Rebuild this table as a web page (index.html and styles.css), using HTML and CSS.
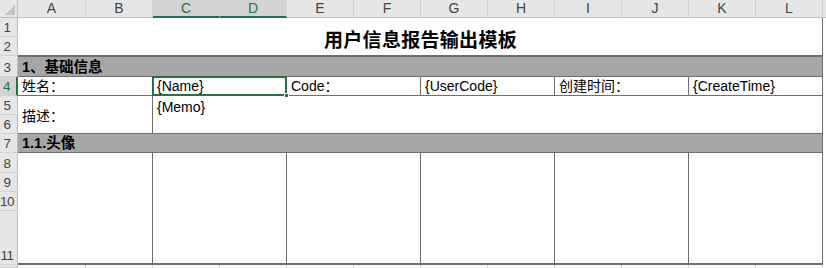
FILE: index.html
```html
<!DOCTYPE html>
<html lang="zh-CN">
<head>
<meta charset="utf-8">
<title>用户信息报告输出模板</title>
<link rel="stylesheet" href="styles.css">
</head>
<body>
<div class="sheet">
  <div class="corner"><span class="tri"></span></div>
  <div class="ch">A</div>
  <div class="ch">B</div>
  <div class="ch sel">C</div>
  <div class="ch sel">D</div>
  <div class="ch">E</div>
  <div class="ch">F</div>
  <div class="ch">G</div>
  <div class="ch">H</div>
  <div class="ch">I</div>
  <div class="ch">J</div>
  <div class="ch">K</div>
  <div class="ch">L</div>
  <div class="ch fillh"></div>

  <div class="rh r1">1</div>
  <div class="rh r2">2</div>
  <div class="rh r3">3</div>
  <div class="rh r4 rsel">4</div>
  <div class="rh r5">5</div>
  <div class="rh r6">6</div>
  <div class="rh r7">7</div>
  <div class="rh r8">8</div>
  <div class="rh r9">9</div>
  <div class="rh r10">10</div>
  <div class="rh r11 bottom">11</div>
  <div class="rh r12"></div>

  <div class="cell title">用户信息报告输出模板</div>
  <div class="cell band band1">1、基础信息</div>

  <div class="cell f4 c-ab">姓名：</div>
  <div class="cell f4 c-cd active">{Name}<span class="handle"></span></div>
  <div class="cell f4 c-ef">Code：</div>
  <div class="cell f4 c-gh">{UserCode}</div>
  <div class="cell f4 c-ij">创建时间：</div>
  <div class="cell f4 c-kl">{CreateTime}</div>

  <div class="cell desc c-ab">描述：</div>
  <div class="cell memo">{Memo}</div>

  <div class="cell band band2">1.1.头像</div>

  <div class="cell pic c-ab"></div>
  <div class="cell pic c-cd"></div>
  <div class="cell pic c-ef"></div>
  <div class="cell pic c-gh"></div>
  <div class="cell pic c-ij"></div>
  <div class="cell pic c-kl"></div>

  <div class="grid12"></div><div class="grid12"></div><div class="grid12"></div>
  <div class="grid12"></div><div class="grid12"></div><div class="grid12"></div>
  <div class="grid12"></div><div class="grid12"></div><div class="grid12"></div>
  <div class="grid12"></div><div class="grid12"></div><div class="grid12"></div>
</div>
</body>
</html>
```
FILE: styles.css
```css
html, body {
  margin: 0;
  padding: 0;
  background: #ffffff;
}

.sheet {
  width: 826px;
  height: 268px;
  overflow: hidden;
  display: grid;
  grid-template-columns: 18px 68px repeat(11, 67px) 1fr;
  grid-template-rows: 18px 19px 19px 21px 19px 19px 19px 19px 20px 19px 19px 54px 1fr;
  font-family: "Liberation Sans", "Noto Sans CJK SC", sans-serif;
  font-size: 14px;
  color: #000;
  background: #fff;
}

.sheet > div {
  box-sizing: border-box;
  min-width: 0;
}

/* column headers */
.corner {
  grid-column: 1;
  grid-row: 1;
  background: #e6e6e6;
  border-right: 1px solid #bdbdbd;
  border-bottom: 1px solid #bdbdbd;
  position: relative;
}
.tri {
  position: absolute;
  right: 2px;
  bottom: 2px;
  width: 0;
  height: 0;
  border-left: 10px solid transparent;
  border-bottom: 10px solid #c4c4c4;
}

.ch {
  grid-row: 1;
  background: #e6e6e6;
  border-right: 1px solid #d2d2d2;
  border-bottom: 1px solid #bdbdbd;
  color: #444;
  font-size: 14px;
  line-height: 17px;
  text-align: center;
}
.ch.sel {
  background: #d3d3d3;
  color: #217346;
  border-bottom: 2px solid #217346;
}
.ch.fillh {
  border-right: none;
}

/* row headers */
.rh {
  grid-column: 1;
  background: #e6e6e6;
  border-right: 1px solid #bdbdbd;
  border-bottom: 1px solid #d0d0d0;
  color: #444;
  font-size: 13.5px;
  padding-right: 3px;
  display: flex;
  align-items: flex-end;
  justify-content: center;
  line-height: 17px;
  white-space: nowrap;
  letter-spacing: -0.5px;
}
.rh.rsel {
  background: #d3d3d3;
  color: #217346;
  border-right: 2px solid #217346;
}
.r1 { grid-row: 2; }
.r2 { grid-row: 3; }
.r3 { grid-row: 4; }
.r4 { grid-row: 5; }
.r5 { grid-row: 6; }
.r6 { grid-row: 7; }
.r7 { grid-row: 8; }
.r8 { grid-row: 9; }
.r9 { grid-row: 10; }
.r10 { grid-row: 11; }
.r11 { grid-row: 12; }
.r12 { grid-row: 13; }

/* data cells */
.cell {
  border-right: 1px solid #6e6e6e;
  border-bottom: 1px solid #6e6e6e;
  padding: 0 3px 0 4px;
  white-space: nowrap;
  overflow: visible;
  display: flex;
  align-items: flex-end;
  line-height: 17px;
}

.title {
  grid-column: 2 / 14;
  grid-row: 2 / 4;
  justify-content: center;
  font-weight: bold;
  font-size: 19px;
  line-height: 24px;
  padding-bottom: 2px;
  letter-spacing: 0.3px;
}

.band {
  grid-column: 2 / 14;
  background: #a6a6a6;
  font-weight: bold;
  font-size: 14.5px;
}
.band1 { grid-row: 4; border-top: 1px solid #6e6e6e; }
.band2 { grid-row: 8; }

.f4 { grid-row: 5; }
.c-ab { grid-column: 2 / 4; }
.c-cd { grid-column: 4 / 6; }
.c-ef { grid-column: 6 / 8; }
.c-gh { grid-column: 8 / 10; }
.c-ij { grid-column: 10 / 12; }
.c-kl { grid-column: 12 / 14; }

.active {
  position: relative;
}
.active::after {
  content: "";
  position: absolute;
  left: -1px;
  top: -1px;
  right: -1px;
  bottom: -1px;
  border: 2px solid #217346;
  pointer-events: none;
}
.handle {
  position: absolute;
  right: -3px;
  bottom: -3px;
  width: 5px;
  height: 5px;
  background: #217346;
  border: 1px solid #fff;
  box-sizing: border-box;
  z-index: 2;
}

.desc {
  grid-row: 6 / 8;
  align-items: center;
  padding-top: 3px;
}
.memo {
  grid-column: 4 / 14;
  grid-row: 6 / 8;
  align-items: flex-start;
  padding-top: 3px;
}

.pic {
  grid-row: 9 / 13;
  border-bottom: 2px solid #6e6e6e;
}

.grid12 {
  grid-row: 13;
  border-right: 1px solid #d4d4d4;
}
```
